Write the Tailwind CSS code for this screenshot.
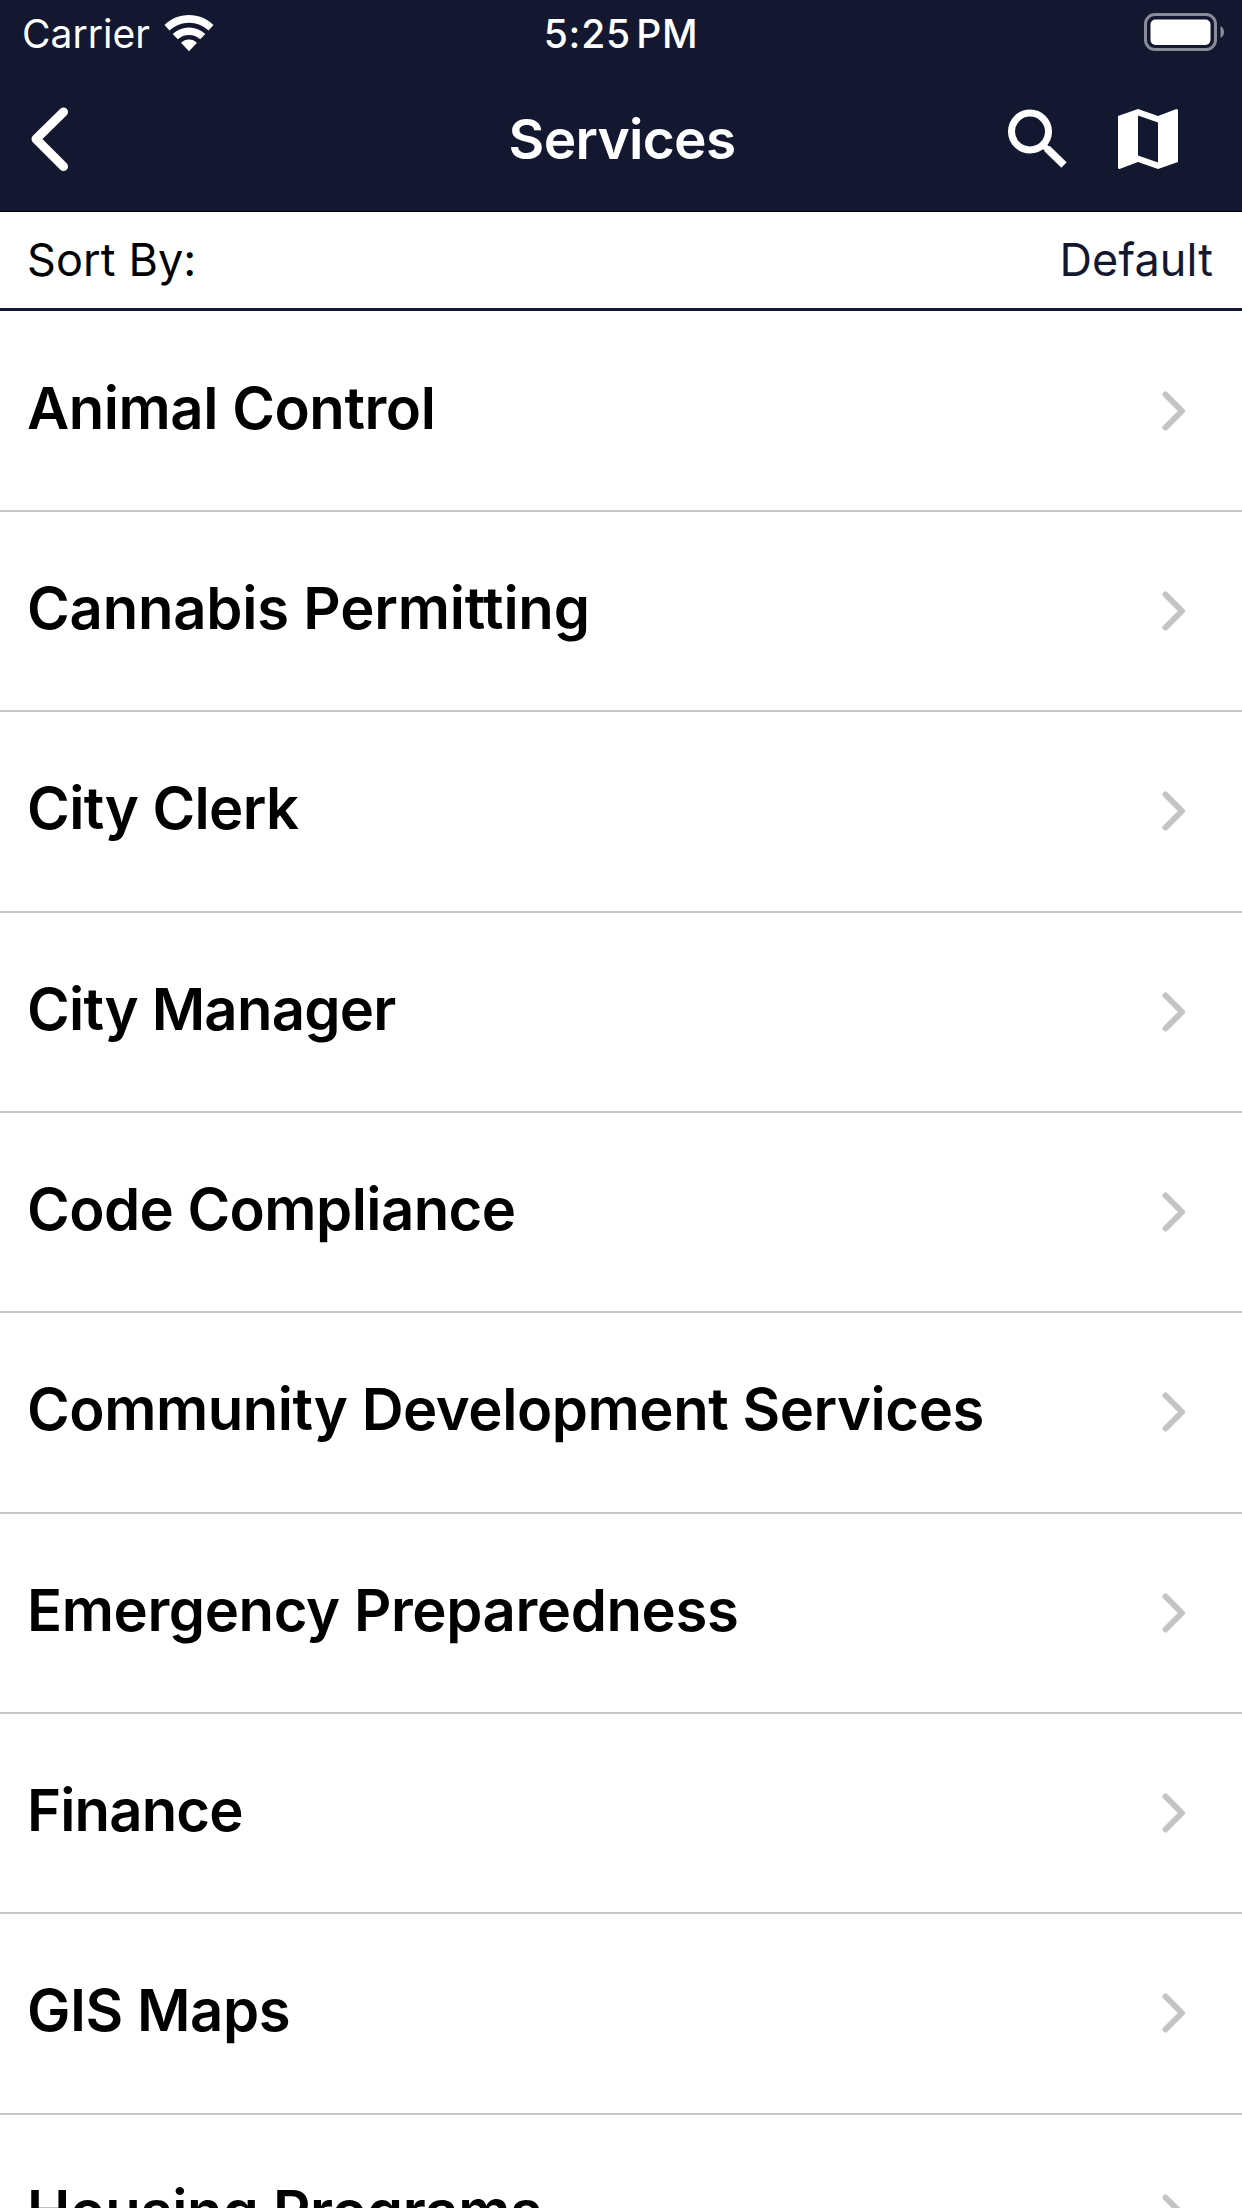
<!DOCTYPE html>
<html lang="en">
<head>
    <meta charset="UTF-8">
    <meta name="viewport" content="width=device-width, initial-scale=1.0">
    <title>Services</title>
    <script src="https://cdn.jsdelivr.net/npm/@tailwindcss/browser@4"></script>
</head>
<body class="bg-white font-['Inter',sans-serif] antialiased h-[2208px] overflow-hidden">
    <header class="bg-[#131830] text-white h-[212px] border-b border-black">
        <!-- Status Bar -->
        <div class="grid grid-cols-3 h-[66px] px-[18px] items-center">
            <div class="flex items-center gap-[14px] pl-1">
                <span class="text-[39px] leading-[64px] pt-[2px]">Carrier</span>
                <svg class="w-[50px] h-[38px]" viewBox="0 0 50 38" fill="currentColor">
                    <path d="M25 1C34.500 1 43 4.600 49.500 11L44.500 16.500C39 11.500 32.500 8.700 25 8.700S11 11.500 5.500 16.500L.5 11C7 4.600 15.500 1 25 1Z" />
                    <path d="M25 13.500C31.200 13.500 36.800 15.800 41.300 20L36.200 25.200C33 22.300 29.300 20.900 25 20.900S17 22.300 13.800 25.200L8.700 20C13.200 15.800 18.800 13.500 25 13.500Z" />
                    <path d="M25 25.500C28 25.500 30.800 26.700 33 28.800L25 37.300L17 28.800C19.200 26.700 22 25.500 25 25.500Z" />
                </svg>
            </div>
            <span class="text-center text-[39px] leading-[64px] font-medium tracking-[0.8px] pt-[2px] [word-spacing:-6px]">5:25 PM</span>
            <svg class="w-[80px] h-[38px] justify-self-end mb-[2px]" viewBox="0 0 80 38" fill="none">
                <rect x="1.500" y="1.500" width="70" height="35" rx="9.500" stroke="#898b98" stroke-width="3" />
                <rect x="6.500" y="6.500" width="60" height="25.500" rx="5" fill="white" />
                <path d="M76.500 13C79 14.500 80 16.500 80 19S79 23.500 76.500 25Z" fill="#898b98" />
            </svg>
        </div>

        <!-- Navigation Bar -->
        <div class="grid grid-cols-3 h-[145px] px-[30px] items-center">
            <svg class="w-[40px] h-[66px]" viewBox="0 0 40 66" fill="none" stroke="currentColor" stroke-width="9" stroke-linecap="round" stroke-linejoin="round">
                <path d="M33.500 6L6 33L33.500 60.500" />
            </svg>
            <h1 class="text-center text-[55px] leading-[72px] font-semibold tracking-[-0.700px] pl-[2px]">Services</h1>
            <div class="flex items-center justify-end gap-[51px] pr-[34px]">
                <svg class="w-[59px] h-[60px]" viewBox="0 0 59 60" fill="none" stroke="currentColor">
                    <circle cx="22" cy="22.500" r="18.500" stroke-width="7" />
                    <path d="M36 37L41 41.500" stroke-width="6" />
                    <path d="M39 39.500L56 56" stroke-width="7.500" />
                </svg>
                <svg class="w-[60px] h-[60px]" viewBox="0 0 60 60" fill="currentColor" fill-rule="evenodd">
                    <path d="M0 7L20 0L40 7L58.500 0Q60 0 60 1.500V53L40 60L20 53L1.500 60Q0 60 0 58.500ZM20 6.500V46.500L40 53.500V13.500Z" />
                </svg>
            </div>
        </div>
    </header>

    <!-- Sort Row -->
    <div class="flex justify-between items-center h-[98.500px] border-b-3 border-[#131830] pl-[27px] pr-[29px] text-[45px] tracking-[0.1px]">
        <span class="text-black">Sort By:</span>
        <span class="text-[#131830]">Default</span>
    </div>

    <!-- Services List -->
    <ul id="serviceList" class="text-black text-[58px] font-semibold pt-px"></ul>

    <template id="serviceRow">
        <li class="flex items-center justify-between h-[200.350px] border-b-2 border-[#c6c6c8] pl-[27px] pr-[55px]">
            <span class="whitespace-nowrap leading-[72px] pb-[6px]"></span>
            <svg class="w-[26px] h-[40px]" viewBox="0 0 26 40" fill="none" stroke="#c4c4c6" stroke-width="6" stroke-linecap="round" stroke-linejoin="round">
                <path d="M4.500 3.500L21 20L4.500 36.500" />
            </svg>
        </li>
    </template>

    <script>
        // name, letter spacing in px
        const services = [
            ['Animal Control', -0.43],
            ['Cannabis Permitting', -0.2],
            ['City Clerk', -0.6],
            ['City Manager', -0.75],
            ['Code Compliance', -0.55],
            ['Community Development Services', -0.45],
            ['Emergency Preparedness', -0.4],
            ['Finance', -0.85],
            ['GIS Maps', -0.45],
            ['Housing Programs', -0.2]
        ];
        const list = document.getElementById('serviceList');
        const template = document.getElementById('serviceRow');

        services.forEach(([name, spacing]) => {
            const row = template.content.cloneNode(true);
            const label = row.querySelector('span');
            label.textContent = name;
            label.style.letterSpacing = spacing + 'px';
            list.appendChild(row);
        });
    </script>
</body>
</html>
